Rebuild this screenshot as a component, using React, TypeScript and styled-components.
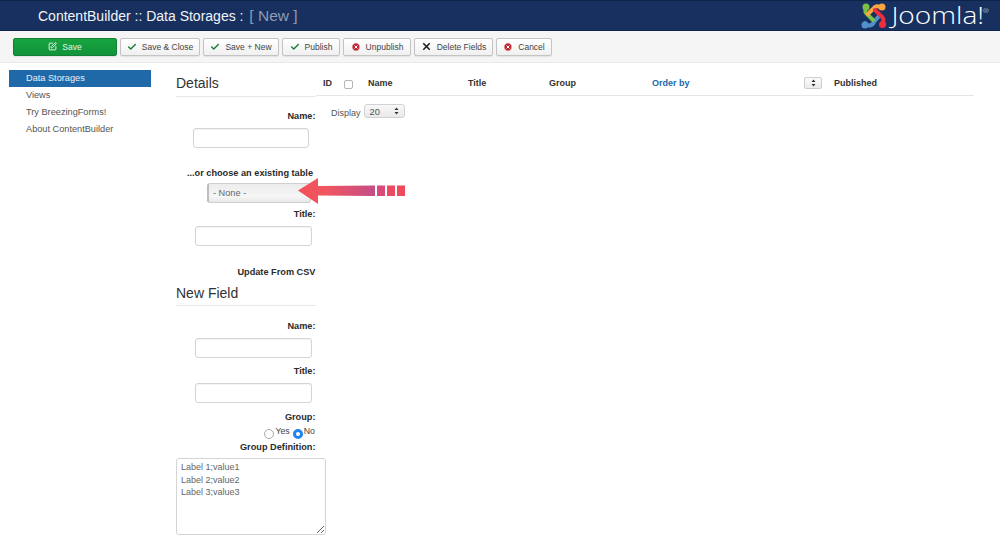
import styled, { createGlobalStyle } from 'styled-components'
import { Check, SquarePen, X, CircleX } from 'lucide-react'

const GlobalStyle = createGlobalStyle`
  html, body {
    margin: 0;
    padding: 0;
    background: #fff;
    font-family: "Liberation Sans", Arial, sans-serif;
    font-size: 9.5px;
    color: #333;
  }
`

const Page = styled.div`
  width: 1000px;
  height: 541px;
  overflow: hidden;
  -webkit-font-smoothing: antialiased;
`

const Header = styled.header`
  height: 29px;
  background: #17305f;
  border-top: 1px solid #0d2247;
  border-bottom: 1px solid #0f2450;
  display: flex;
  align-items: center;
  justify-content: space-between;
  padding: 0 11px 0 38px;
`

const PageTitle = styled.h1`
  margin: 0;
  font-size: 14px;
  font-weight: 400;
  color: #f2f4f8;

  small {
    font-size: 15.5px;
    margin-left: 2px;
    color: #8f9bb2;
  }
`

const Brand = styled.div`
  display: flex;
  align-items: center;
`

const BrandName = styled.span`
  display: inline-block;
  margin-left: 22px;
  font-family: "Open Sans", sans-serif;
  font-size: 23px;
  font-weight: 300;
  line-height: 25px;
  color: #fff;
  transform: scaleX(1.22);
  transform-origin: right center;

  sup {
    font-size: 6px;
    line-height: 0;
    vertical-align: 11px;
    margin-left: -1px;
  }
`

const Toolbar = styled.div`
  height: 31px;
  background: #f5f5f5;
  border-bottom: 1px solid #e9e9e9;
  display: flex;
  align-items: center;
  gap: 3px;
  padding: 0 0 0 13px;
`

const Button = styled.button<{ $primary?: boolean; $width: number }>`
  width: ${p => p.$width}px;
  height: 18px;
  padding: 0;
  display: flex;
  align-items: center;
  justify-content: center;
  gap: 5px;
  font: inherit;
  font-size: 8.5px;
  border-radius: 2px;
  color: ${p => (p.$primary ? '#e4f3e6' : '#444')};
  background: ${p => (p.$primary ? 'linear-gradient(#17a43f, #12933a)' : 'linear-gradient(#fff, #f0f0f0)')};
  border: 1px solid ${p => (p.$primary ? '#128036' : '#c4c4c4')};
  box-shadow: 0 1px 1px rgba(0, 0, 0, 0.08);
`

const Content = styled.div`
  display: flex;
  align-items: flex-start;
  padding: 7px 26px 0 9px;
`

const Sidebar = styled.nav`
  width: 142px;
  margin-right: 25px;
  flex: none;
`

const NavItem = styled.a<{ $active?: boolean }>`
  display: block;
  height: 17px;
  line-height: 16px;
  padding-left: 17px;
  font-size: 9.2px;
  color: ${p => (p.$active ? '#e8eff7' : '#555')};
  background: ${p => (p.$active ? '#1f69a8' : 'transparent')};
`

const FormColumn = styled.div`
  position: relative;
  width: 140px;
  flex: none;
  margin-top: 4px;
`

const SectionTitle = styled.h2<{ $tight?: boolean }>`
  margin: ${p => (p.$tight ? 6 : 0)}px 0 ${p => (p.$tight ? 14 : 13)}px;
  padding-bottom: ${p => (p.$tight ? 3 : 4)}px;
  font-size: 14px;
  line-height: 18px;
  font-weight: 400;
  color: #333;
  border-bottom: 1px solid #e8e8e8;
`

const FieldLabel = styled.label<{ $below?: number; $inset?: number }>`
  display: block;
  text-align: right;
  font-size: 9.2px;
  font-weight: 700;
  line-height: 12px;
  color: #2b2b2b;
  margin-bottom: ${p => p.$below ?? 6}px;
  padding-right: ${p => p.$inset ?? 0.5}px;
`

const TextField = styled.input<{ $width?: number; $offset?: number; $below?: number }>`
  display: block;
  box-sizing: border-box;
  width: ${p => p.$width ?? 117}px;
  height: 20px;
  margin: 0 0 ${p => p.$below ?? 18}px ${p => p.$offset ?? 19}px;
  padding: 0 6px;
  border: 1px solid #d4d4d4;
  border-radius: 3px;
  background: #fff;
  box-shadow: inset 0 1px 1px rgba(0, 0, 0, 0.05);
`

const NativeLikeSelect = styled.div`
  box-sizing: border-box;
  width: 104px;
  height: 20px;
  margin: 0 0 5px 31px;
  padding-left: 4px;
  line-height: 18px;
  font-size: 9.2px;
  color: #666;
  border: 1px solid #cfcfcf;
  border-left: 2px solid #bdbdbd;
  border-radius: 3px;
  background: linear-gradient(#ececec, #f6f6f6 70%, #e8e8e8);
`

const ArrowMark = styled.svg`
  position: absolute;
  left: 121px;
  top: 103px;
`

const RadioRow = styled.div`
  display: flex;
  justify-content: flex-end;
  align-items: flex-start;
  gap: 1px;
  height: 15px;
  margin: 0 0 1px;
  padding-right: 1px;
  font-size: 8.8px;
  color: #444;
`

const Radio = styled.span<{ $checked?: boolean }>`
  box-sizing: border-box;
  width: 10px;
  height: 10px;
  margin-top: 4px;
  border-radius: 50%;
  background: #fff;
  border: ${p => (p.$checked ? '3px solid #2383f0' : '1px solid #aaa')};
`

const RadioText = styled.span`
  line-height: 13px;
  margin-right: 2px;

  &:last-child {
    margin-right: 0;
  }
`

const DefinitionBox = styled.textarea`
  display: block;
  box-sizing: border-box;
  width: 150px;
  height: 77px;
  margin: 5px 0 0;
  padding: 2px 4px;
  font: inherit;
  font-size: 9px;
  line-height: 12.5px;
  color: #666;
  border: 1px solid #d4d4d4;
  border-radius: 3px;
  background: #fff;
  resize: both;
`

const ListColumn = styled.div`
  flex: 1;
`

const ListHead = styled.div`
  display: flex;
  align-items: center;
  height: 25px;
  border-bottom: 1px solid #e6e6e6;
  font-size: 9px;
  font-weight: 700;
  color: #333;
`

const HeadCell = styled.span<{ $width: number; $link?: boolean }>`
  width: ${p => p.$width}px;
  flex: none;
  color: ${p => (p.$link ? '#1d66a8' : 'inherit')};
`

const HeadCheck = styled.span`
  box-sizing: border-box;
  width: 9px;
  height: 9px;
  margin: 3px 15px 0 0;
  flex: none;
  border: 1px solid #b5b5b5;
  border-radius: 2px;
  background: #fff;
`

const SortButton = styled.span`
  box-sizing: border-box;
  width: 18px;
  height: 12px;
  margin-right: 12px;
  flex: none;
  display: flex;
  align-items: center;
  justify-content: center;
  border: 1px solid #cdcdcd;
  border-radius: 2px;
  background: linear-gradient(#fbfbfb, #ececec);
`

const DisplayRow = styled.div`
  display: flex;
  align-items: center;
  gap: 3px;
  margin: 12px 0 0 15px;
  font-size: 9px;
  color: #555;
`

const PageSize = styled.span`
  box-sizing: border-box;
  width: 41px;
  height: 14px;
  padding: 0 5px;
  display: flex;
  align-items: center;
  justify-content: space-between;
  margin-top: -4px;
  font-size: 9.4px;
  border: 1px solid #d2d2d2;
  border-radius: 3px;
  background: linear-gradient(#f8f8f8, #e9e9e9);
`

const Stepper = () => (
  <svg width="5" height="8" viewBox="0 0 5 8">
    <path d="M2.5 0.5 L4.5 3 H0.5 Z M2.5 7.5 L4.5 5 H0.5 Z" fill="#333" />
  </svg>
)

const JoomlaMark = () => (
  <svg width="27" height="28" viewBox="0 0 27 28" fill="none" strokeLinecap="round">
    <path d="M5 21 C8 25 12 24 14 20 L19 14" stroke="#5091cd" strokeWidth="4" />
    <path d="M7 5 C4 8 5 11 8 13 L13 18" stroke="#7ac143" strokeWidth="4" />
    <path d="M21 6 C18 3 15 4 13 7 L8 12" stroke="#f9a541" strokeWidth="4" />
    <path d="M22 22 C25 18 23 15 20 13 L15 8" stroke="#ee2d3d" strokeWidth="4" />
    <circle cx="6" cy="5" r="3.5" fill="#7ac143" />
    <circle cx="22" cy="5" r="3.5" fill="#f9a541" />
    <circle cx="22.5" cy="22.5" r="3.5" fill="#ee2d3d" />
    <circle cx="5" cy="23" r="3.5" fill="#5091cd" />
  </svg>
)

const toolbarButtons = [
  { label: 'Save & Close', width: 80, icon: <Check size={10} color="#1a7f37" strokeWidth={3.4} /> },
  { label: 'Save + New', width: 76, icon: <Check size={10} color="#1a7f37" strokeWidth={3.4} /> },
  { label: 'Publish', width: 58, icon: <Check size={10} color="#1a7f37" strokeWidth={3.4} /> },
  { label: 'Unpublish', width: 68, icon: <CircleX size={10} color="#fff" fill="#bd2130" strokeWidth={2.4} /> },
  { label: 'Delete Fields', width: 79, icon: <X size={11} color="#222" strokeWidth={3.6} /> },
  { label: 'Cancel', width: 56, icon: <CircleX size={10} color="#fff" fill="#bd2130" strokeWidth={2.4} /> },
]

const navItems = ['Data Storages', 'Views', 'Try BreezingForms!', 'About ContentBuilder']

export default function App() {
  return (
    <Page>
      <GlobalStyle />
      <Header>
        <PageTitle>
          ContentBuilder :: Data Storages : <small>[ New ]</small>
        </PageTitle>
        <Brand>
          <JoomlaMark />
          <BrandName>
            Joomla!<sup>®</sup>
          </BrandName>
        </Brand>
      </Header>

      <Toolbar>
        <Button $primary $width={104}>
          <SquarePen size={9} color="#e4f3e6" strokeWidth={2.6} />
          Save
        </Button>
        {toolbarButtons.map(b => (
          <Button key={b.label} $width={b.width}>
            {b.icon}
            {b.label}
          </Button>
        ))}
      </Toolbar>

      <Content>
        <Sidebar>
          {navItems.map((item, i) => (
            <NavItem key={item} $active={i === 0}>
              {item}
            </NavItem>
          ))}
        </Sidebar>

        <FormColumn>
          <SectionTitle>Details</SectionTitle>
          <FieldLabel>Name:</FieldLabel>
          <TextField $offset={17} $width={116} $below={19} />
          <FieldLabel $inset={3} $below={4}>...or choose an existing table</FieldLabel>
          <NativeLikeSelect>- None -</NativeLikeSelect>
          <FieldLabel>Title:</FieldLabel>
          <TextField $below={20} />
          <FieldLabel $below={0}>Update From CSV</FieldLabel>
          <SectionTitle $tight>New Field</SectionTitle>
          <FieldLabel>Name:</FieldLabel>
          <TextField $below={7} />
          <FieldLabel>Title:</FieldLabel>
          <TextField $below={8} />
          <FieldLabel $below={2}>Group:</FieldLabel>
          <RadioRow>
            <Radio />
            <RadioText>Yes</RadioText>
            <Radio $checked />
            <RadioText>No</RadioText>
          </RadioRow>
          <FieldLabel $below={0}>Group Definition:</FieldLabel>
          <DefinitionBox readOnly defaultValue={'Label 1;value1\nLabel 2;value2\nLabel 3;value3'} />
          <ArrowMark width="112" height="28" viewBox="0 0 112 28">
            <defs>
              <linearGradient id="arrowFill" x1="0" x2="1" y1="0" y2="0">
                <stop offset="0" stopColor="#f4505a" />
                <stop offset="0.35" stopColor="#f0565f" />
                <stop offset="1" stopColor="#c44d86" />
              </linearGradient>
            </defs>
            <path d="M1 13.5 L21 1 L21 9 L78 8.5 L78 19 L21 18.5 L21 27 Z" fill="url(#arrowFill)" />
            <rect x="80" y="8.5" width="8" height="10.5" fill="#d94a78" />
            <rect x="90" y="8.5" width="8" height="10.5" fill="#ec4a62" />
            <rect x="100" y="8.5" width="8" height="10.5" fill="#ef4a5c" />
          </ArrowMark>
        </FormColumn>

        <ListColumn>
          <ListHead>
            <HeadCell $width={7} />
            <HeadCell $width={21}>ID</HeadCell>
            <HeadCheck />
            <HeadCell $width={100}>Name</HeadCell>
            <HeadCell $width={81}>Title</HeadCell>
            <HeadCell $width={103}>Group</HeadCell>
            <HeadCell $width={152} $link>Order by</HeadCell>
            <SortButton><Stepper /></SortButton>
            <HeadCell $width={60}>Published</HeadCell>
          </ListHead>
          <DisplayRow>
            Display
            <PageSize>
              20
              <Stepper />
            </PageSize>
          </DisplayRow>
        </ListColumn>
      </Content>
    </Page>
  )
}
